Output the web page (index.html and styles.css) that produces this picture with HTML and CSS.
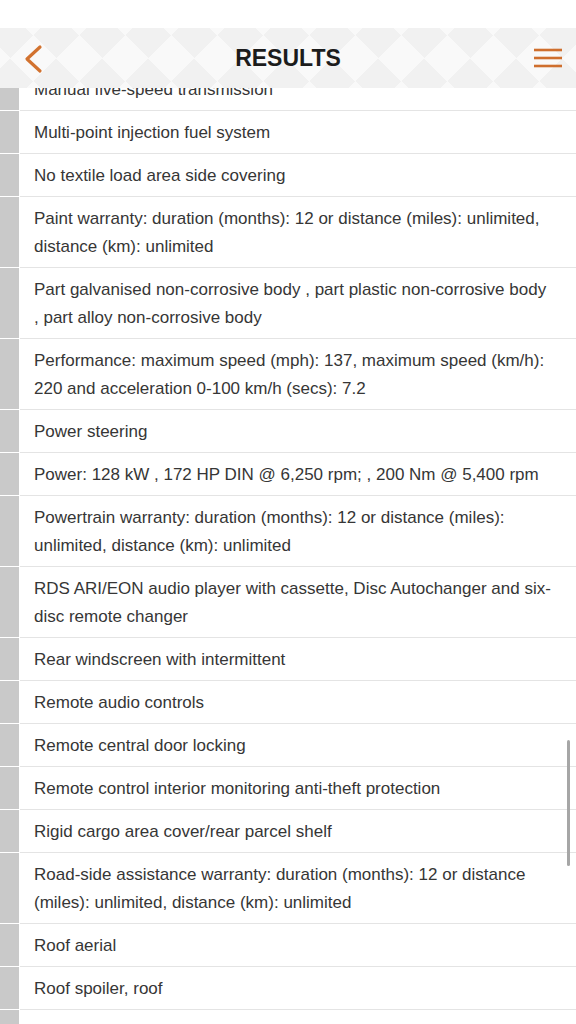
FILE: index.html
```html
<!DOCTYPE html>
<html lang="en">
<head>
  <meta charset="UTF-8">
  <title>Results</title>
  <link rel="stylesheet" href="styles.css">
</head>
<body>

<div class="status-bar"></div>

<header class="top-bar">
  <div class="back-button">
    <svg width="30" height="30" viewBox="0 0 30 30">
      <polyline points="26,3 13,15 26,27" fill="none" stroke="#d2722f" stroke-width="3.2" stroke-linecap="round" stroke-linejoin="round"/>
    </svg>
  </div>
  <div class="title">RESULTS</div>
  <div class="menu-button">
    <svg width="30" height="22" viewBox="0 0 30 22">
      <line x1="2" y1="3" x2="30" y2="3" stroke="#cf6f2e" stroke-width="2.6"/>
      <line x1="2" y1="11" x2="30" y2="11" stroke="#cf6f2e" stroke-width="2.6"/>
      <line x1="2" y1="19" x2="30" y2="19" stroke="#cf6f2e" stroke-width="2.6"/>
    </svg>
  </div>
</header>

<ul class="result-list">
  <li><span class="marker"></span><span class="label">Manual five-speed transmission</span></li>
  <li><span class="marker"></span><span class="label">Multi-point injection fuel system</span></li>
  <li><span class="marker"></span><span class="label">No textile load area side covering</span></li>
  <li><span class="marker"></span><span class="label">Paint warranty: duration (months): 12 or distance (miles): unlimited, distance (km): unlimited</span></li>
  <li><span class="marker"></span><span class="label">Part galvanised non-corrosive body , part plastic non-corrosive body , part alloy non-corrosive body</span></li>
  <li><span class="marker"></span><span class="label">Performance: maximum speed (mph): 137, maximum speed (km/h): 220 and acceleration 0-100 km/h (secs): 7.2</span></li>
  <li><span class="marker"></span><span class="label">Power steering</span></li>
  <li><span class="marker"></span><span class="label">Power: 128 kW , 172 HP DIN @ 6,250 rpm; , 200 Nm @ 5,400 rpm</span></li>
  <li><span class="marker"></span><span class="label">Powertrain warranty: duration (months): 12 or distance (miles): unlimited, distance (km): unlimited</span></li>
  <li><span class="marker"></span><span class="label">RDS ARI/EON audio player with cassette, Disc Autochanger and six-disc remote changer</span></li>
  <li><span class="marker"></span><span class="label">Rear windscreen with intermittent</span></li>
  <li><span class="marker"></span><span class="label">Remote audio controls</span></li>
  <li><span class="marker"></span><span class="label">Remote central door locking</span></li>
  <li><span class="marker"></span><span class="label">Remote control interior monitoring anti-theft protection</span></li>
  <li><span class="marker"></span><span class="label">Rigid cargo area cover/rear parcel shelf</span></li>
  <li><span class="marker"></span><span class="label">Road-side assistance warranty: duration (months): 12 or distance (miles): unlimited, distance (km): unlimited</span></li>
  <li><span class="marker"></span><span class="label">Roof aerial</span></li>
  <li><span class="marker"></span><span class="label">Roof spoiler, roof</span></li>
  <li><span class="marker"></span><span class="label"></span></li>
</ul>

<div class="scroll-thumb"></div>

</body>
</html>
```

FILE: styles.css
```css
html, body {
  margin: 0;
  padding: 0;
  background-color: #fff;
  height: 1024px;
  overflow: hidden;
}
body {
  font-family: 'Liberation Sans', Arial, sans-serif;
  color: #363636;
  position: relative;
}
.status-bar {
  height: 28px;
  background-color: #fff;
  position: relative;
  z-index: 3;
}
.top-bar {
  position: absolute;
  top: 28px;
  left: 0;
  right: 0;
  height: 60px;
  z-index: 2;
  display: flex;
  align-items: center;
  justify-content: space-between;
  padding: 0 14px;
  background-color: #f9f9f9;
  background-image:
    linear-gradient(135deg, #f1f1f1 25%, transparent 25%),
    linear-gradient(225deg, #f1f1f1 25%, transparent 25%),
    linear-gradient(315deg, #f1f1f1 25%, transparent 25%),
    linear-gradient(45deg, #f1f1f1 25%, transparent 25%);
  background-size: 46px 46px;
  background-position: 10px 7px;
}
.back-button, .menu-button {
  display: flex;
  align-items: center;
  width: 30px;
}
.back-button {
  margin-top: 1px;
}
.title {
  font-size: 23px;
  font-weight: bold;
  color: #1c1c1c;
  margin-top: 1px;
}
.result-list {
  list-style: none;
  margin: 40px 0 0;
  padding: 0;
}
.result-list li {
  display: flex;
}
.marker {
  flex: 0 0 19px;
  background-color: #c9c9c9;
  margin-right: 1px;
  border-bottom: 1px solid #fff;
}
.label {
  flex: 1;
  min-height: 28px;
  font-size: 17px;
  line-height: 28px;
  padding: 8px 24px 6px 14px;
  border-bottom: 1px solid #e4e4e4;
}
.scroll-thumb {
  position: absolute;
  top: 740px;
  right: 6px;
  width: 3px;
  height: 126px;
  border-radius: 2px;
  background-color: #a6a6a6;
}
```
